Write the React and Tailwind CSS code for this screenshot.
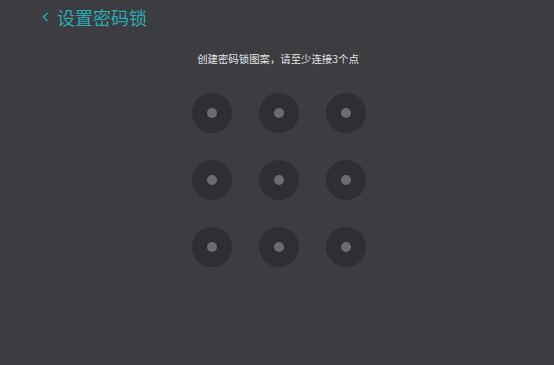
const Dot = () => (
  <div className="w-10 h-10 rounded-full bg-[#2f2e33] flex items-center justify-center">
    <div className="w-[10px] h-[10px] rounded-full bg-[#6c6b70]" />
  </div>
);

export default function App() {
  return (
    <div
      className="w-[554px] h-[365px] bg-[#3d3c41] flex flex-col"
      style={{ fontFamily: '"Noto Sans CJK SC", "Noto Sans", sans-serif' }}
    >
      <div className="h-[34px] flex items-center pl-[41px] gap-[6px] text-[#2aaab4]">
        <svg width="10" height="12" viewBox="0 0 10 12" fill="none">
          <path d="M6.5 2 L2.5 6 L6.5 10" stroke="currentColor" strokeWidth="1.4" />
        </svg>
        <span className="text-[18px] leading-none">设置密码锁</span>
      </div>
      <div className="mt-[18px] text-center text-[10.4px] leading-[14px] text-[#e4e4e6] pl-[2px]">
        创建密码锁图案，请至少连接3个点
      </div>
      <div className="mt-[27px] mx-auto grid grid-cols-3 gap-x-[27px] gap-y-[27px] pl-[3px]">
        {Array.from({ length: 9 }).map((_, i) => (
          <Dot key={i} />
        ))}
      </div>
    </div>
  );
}
